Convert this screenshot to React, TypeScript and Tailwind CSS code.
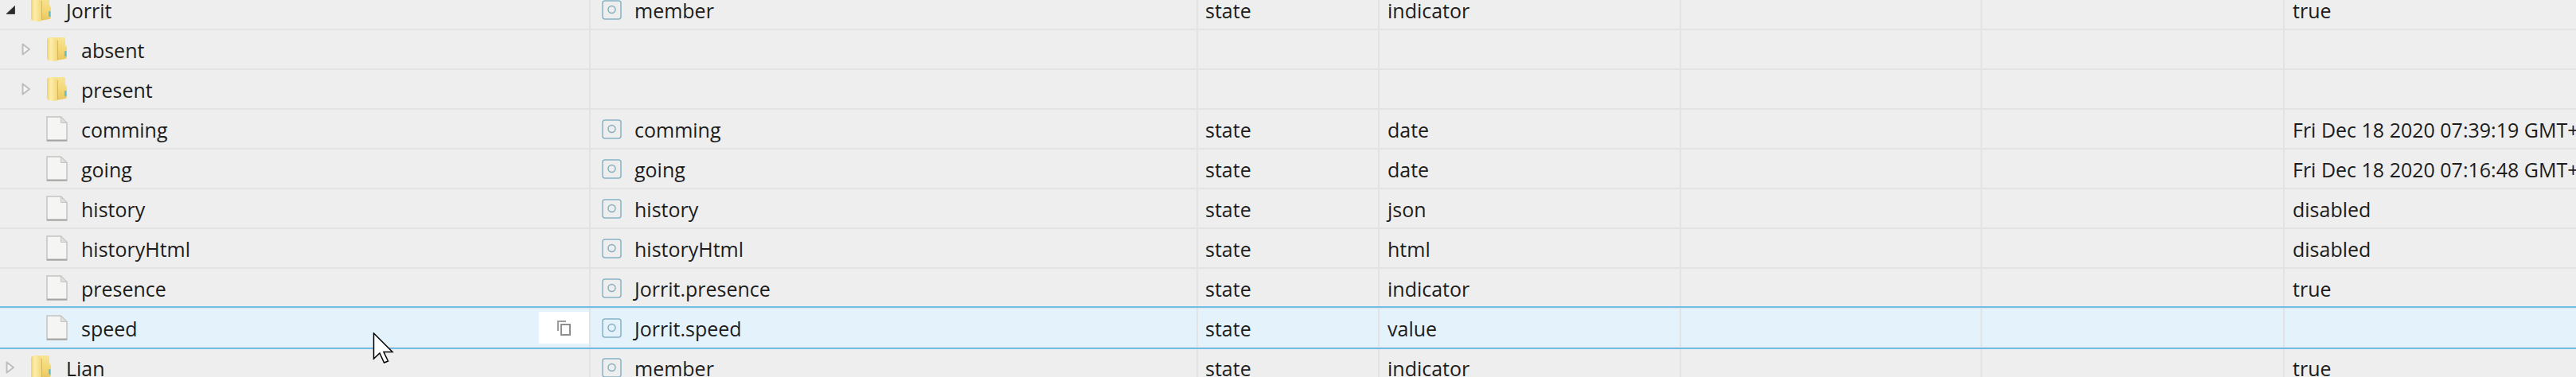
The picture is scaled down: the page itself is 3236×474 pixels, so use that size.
const GRID = "grid grid-cols-[742px_763px_228px_379px_378px_380px_366px] h-[50px] border-b-2 border-[#e3e3e3] text-[25px] leading-[34px] text-[#1c1c1c]";
const CELL = "flex items-center min-w-0 overflow-hidden whitespace-nowrap border-r-2 border-[#e3e3e3] pt-[2px]";

type Row = {
  name: string;
  level: number;
  kind: "open" | "closed" | "file";
  role?: string;
  type?: string;
  sub?: string;
  value?: string;
};

const rows: Row[] = [
  { name: "Jorrit", level: 0, kind: "open", role: "member", type: "state", sub: "indicator", value: "true" },
  { name: "absent", level: 1, kind: "closed" },
  { name: "present", level: 1, kind: "closed" },
  { name: "comming", level: 1, kind: "file", role: "comming", type: "state", sub: "date", value: "Fri Dec 18 2020 07:39:19 GMT+0100" },
  { name: "going", level: 1, kind: "file", role: "going", type: "state", sub: "date", value: "Fri Dec 18 2020 07:16:48 GMT+0100" },
  { name: "history", level: 1, kind: "file", role: "history", type: "state", sub: "json", value: "disabled" },
  { name: "historyHtml", level: 1, kind: "file", role: "historyHtml", type: "state", sub: "html", value: "disabled" },
  { name: "presence", level: 1, kind: "file", role: "Jorrit.presence", type: "state", sub: "indicator", value: "true" },
  { name: "speed", level: 1, kind: "file", role: "Jorrit.speed", type: "state", sub: "value" },
  { name: "Lian", level: 0, kind: "closed", role: "member", type: "state", sub: "indicator", value: "true" },
];

function Toggle({ kind }: { kind: Row["kind"] }) {
  if (kind === "file") return <span className="w-[31px] shrink-0" />;
  return (
    <span className="w-[31px] shrink-0 flex items-center mb-[2px]">
      {kind === "open" ? (
        <svg width="13" height="13" viewBox="0 0 13 13">
          <path d="M1 11.5 L11.5 11.5 L11.5 1.5 Z" fill="#2b2b2b" stroke="#444" strokeWidth="1" />
        </svg>
      ) : (
        <svg width="12" height="16" viewBox="0 0 12 16">
          <path d="M1.5 1.5 L10 8 L1.5 14.5 Z" fill="#f4f4f4" stroke="#bdbdbd" strokeWidth="2" strokeLinejoin="round" />
        </svg>
      )}
    </span>
  );
}

function FolderIcon() {
  return (
    <svg width="27" height="32" viewBox="0 0 27 32" className="shrink-0 mb-[2px]">
      <defs>
        <linearGradient id="folderBack" x1="0" y1="0" x2="0" y2="1">
          <stop offset="0" stopColor="#f8e494" />
          <stop offset="0.6" stopColor="#f2d672" />
          <stop offset="1" stopColor="#e8c65e" />
        </linearGradient>
        <linearGradient id="folderFront" x1="0" y1="0" x2="1" y2="0">
          <stop offset="0" stopColor="#f0d070" />
          <stop offset="0.35" stopColor="#fceeac" />
          <stop offset="1" stopColor="#f3d87a" />
        </linearGradient>
      </defs>
      <path d="M4 1 L22 1 Q24 1 24 3 L24 10 L26 14 L26 26 Q26 27.5 24 28 L13 30 L4 30 Z" fill="url(#folderBack)" />
      <path d="M1 4 Q1 1.5 4 1.5 L10 1.5 Q14 2 14 7 L14 29 Q14 31.5 11 31 L3 30 Q1 29.5 1 27 Z" fill="url(#folderFront)" />
      <path d="M14.5 5 L14.5 29" stroke="#d2ae52" strokeWidth="1" opacity="0.8" />
      <rect x="23" y="18" width="2.5" height="7" rx="1" fill="#62bfcb" />
    </svg>
  );
}

function FileIcon() {
  return (
    <svg width="27" height="32" viewBox="0 0 27 32" className="shrink-0 mb-[2px]">
      <path d="M1 1 L18.5 1 L26 8.5 L26 31 L1 31 Z" fill="#f5f6f3" stroke="#c4c4c2" strokeWidth="1.5" />
      <path d="M18.5 1 L18.5 8.5 L26 8.5 Z" fill="#dededc" stroke="#c4c4c2" strokeWidth="1" />
      <path d="M1 30.5 L26 30.5" stroke="#a4a4a2" strokeWidth="2" />
    </svg>
  );
}

function RoleIcon() {
  return (
    <svg width="25" height="25" viewBox="0 0 25 25" className="shrink-0 mr-[16px] mb-[1px]">
      <rect x="1" y="1" width="23" height="23" rx="3" fill="none" stroke="#86b3c6" strokeWidth="1.5" />
      <circle cx="12.5" cy="12" r="4.5" fill="none" stroke="#86aebd" strokeWidth="1.5" />
    </svg>
  );
}

function CopyIcon() {
  return (
    <svg width="17" height="19" viewBox="0 0 17 19">
      <path d="M1 13 L1 1 L11 1" fill="none" stroke="#a09a96" strokeWidth="2" />
      <rect x="5" y="5" width="11" height="13" fill="#fff" stroke="#8f8f8f" strokeWidth="2" />
    </svg>
  );
}

function TableRow({ row }: { row: Row }) {
  const selected = row.name === "speed";
  return (
    <div className={`relative ${selected ? "z-10 bg-[#e3f2fb]" : ""}`}>
      {selected && (
        <>
          <div className="absolute left-0 right-0 -top-[3px] h-[2px] bg-[#70bde8]" />
          <div className="absolute left-0 right-0 -bottom-[1px] h-[2px] bg-[#70bde8]" />
        </>
      )}
      <div className={GRID}>
        <div className={`${CELL} relative ${row.level ? "pl-[27px]" : "pl-[7px]"}`}>
          <Toggle kind={row.kind} />
          {row.kind === "file" ? <FileIcon /> : <FolderIcon />}
          <span className={row.level ? "ml-[17px]" : "ml-[18px]"}>{row.name}</span>
          {selected && (
            <span className="absolute right-0 top-[4px] w-[63px] h-[40px] bg-white flex items-center justify-center">
              <CopyIcon />
            </span>
          )}
        </div>
        <div className={`${CELL} pl-[14px]`}>
          {row.role && (
            <>
              <RoleIcon />
              <span>{row.role}</span>
            </>
          )}
        </div>
        <div className={`${CELL} pl-[9px]`}>{row.type}</div>
        <div className={`${CELL} pl-[10px]`}>{row.sub}</div>
        <div className={CELL} />
        <div className={CELL} />
        <div className="flex items-center min-w-0 overflow-hidden whitespace-nowrap pl-[10px] pt-[2px]">{row.value}</div>
      </div>
    </div>
  );
}

export default function App() {
  return (
    <div className="relative w-[3236px] h-[474px] overflow-hidden bg-[#eeeeee] font-['Open_Sans','Liberation_Sans',sans-serif]">
      <div className="-mt-[12px]">
        {rows.map((row) => (
          <TableRow key={row.name} row={row} />
        ))}
      </div>
      {/* mouse pointer */}
      <svg width="28" height="40" viewBox="0 0 28 40" className="absolute z-20 left-[468px] top-[418px]">
        <path d="M1.5 1 L1.5 33 L9 26 L14.5 38 L19.5 36 L14 24.5 L25 24.5 Z" fill="#fff" stroke="#000" strokeWidth="1.5" />
      </svg>
    </div>
  );
}
